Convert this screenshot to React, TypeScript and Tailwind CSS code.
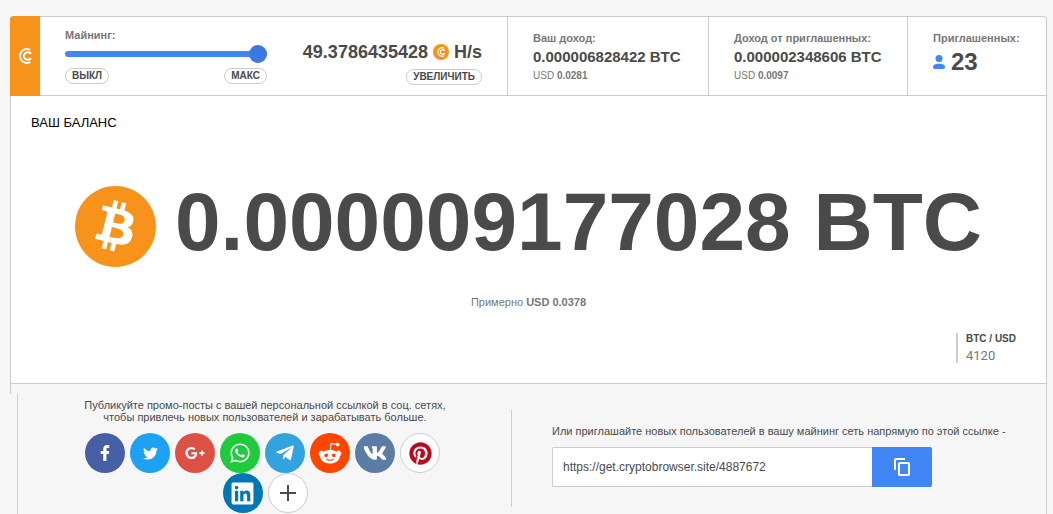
import type { ReactNode } from "react";
import {
  FaFacebookF,
  FaGooglePlusG,
  FaLinkedin,
  FaPinterest,
  FaTelegramPlane,
  FaTwitter,
  FaVk,
  FaWhatsapp,
} from "react-icons/fa";
import { SiBitcoin } from "react-icons/si";

function CryptoMark({ className }: { className: string }) {
  return (
    <svg viewBox="0 0 16 16" className={className} fill="none" stroke="currentColor" strokeLinecap="round">
      <path d="M12.6 1.7A6.9 6.9 0 1 0 12.6 14.3" strokeWidth="1.9" />
      <path d="M13.6 5.2A4.2 3.6 0 1 0 13.6 10.8" strokeWidth="1.9" />
    </svg>
  );
}

function RedditMark() {
  return (
    <svg viewBox="0 0 24 24" className="size-6" fill="currentColor">
      <path
        fillRule="evenodd"
        d="M12 9c2.6 0 4.9.6 6.6 1.7a2.7 2.7 0 1 1 3.300 4.200C21.900 19.200 17.500 22.500 12 22.500S2.100 19.200 2.100 14.900A2.700 2.700 0 1 1 5.400 10.700C7.100 9.600 9.400 9 12 9ZM8.200 12.400a1.900 1.900 0 1 0 0 3.800a1.900 1.900 0 0 0 0-3.800ZM15.800 12.400a1.900 1.900 0 1 0 0 3.800a1.900 1.900 0 0 0 0-3.800ZM7.800 18.100C10 20.600 14 20.600 16.200 18.100L15.500 17.500C13.500 19.300 10.500 19.300 8.500 17.500Z"
      />
      <path d="M12.300 9.500L13 2.500L18.500 3.400" fill="none" stroke="currentColor" strokeWidth="1.100" />
      <circle cx="19.600" cy="3.500" r="1.900" />
    </svg>
  );
}

function PillButton({ children }: { children: ReactNode }) {
  return (
    <button
      type="button"
      className="h-4 rounded-full border border-[#ccc] bg-white px-[6px] text-[10px] leading-[14px] font-bold text-[#4a4a4a]"
    >
      {children}
    </button>
  );
}

function Income({ label, value, usd }: { label: string; value: string; usd: string }) {
  return (
    <section className="border-l border-[#ccc] pt-[14px] pl-[25px] whitespace-nowrap">
      <h2 className="text-[11px] leading-4 font-bold text-[#777]">{label}</h2>
      <p className="text-[15px] leading-[22px] font-bold text-[#4a4a4a]">{value}</p>
      <p className="text-[10px] leading-4 text-[#777]">
        USD <b>{usd}</b>
      </p>
    </section>
  );
}

const networks = [
  { name: "Facebook", style: "bg-[#4760a5] text-white", icon: <FaFacebookF size={16} /> },
  { name: "Twitter", style: "bg-[#1da1f2] text-white", icon: <FaTwitter size={15} /> },
  { name: "Google+", style: "bg-[#dd5044] text-white", icon: <FaGooglePlusG size={20} /> },
  { name: "WhatsApp", style: "bg-[#1fcb3c] text-white", icon: <FaWhatsapp size={22} /> },
  { name: "Telegram", style: "bg-[#33a3df] text-white", icon: <FaTelegramPlane size={20} /> },
  { name: "Reddit", style: "bg-[#ff4500] text-white", icon: <RedditMark /> },
  { name: "VK", style: "bg-[#5a7ca5] text-white", icon: <FaVk size={24} /> },
  { name: "Pinterest", style: "border border-[#ccc] bg-white text-[#bd081c]", icon: <FaPinterest size={23} /> },
  { name: "LinkedIn", style: "bg-[#0077b5] text-white", icon: <FaLinkedin size={25} /> },
];

export default function App() {
  return (
    <main className="flex min-h-screen flex-col bg-[#f6f6f6] pt-4 pr-[6px] pl-[10px] font-['Liberation_Sans',Arial,sans-serif] text-[#4a4a4a]">
      <div className="flex flex-1 flex-col rounded-t border-t border-r border-[#ccc]">
        <div className="rounded-t border-l border-[#ccc] bg-white">
          <header className="-mt-px -ml-px grid grid-cols-[30px_467fr_201fr_199fr_139fr]">
            <div className="flex items-center justify-center rounded-tl bg-[#f7931a] text-white">
              <CryptoMark className="size-4" />
            </div>
            <section className="flex h-20 justify-between border-b border-[#ccc] px-[25px]">
              <div className="flex w-[202px] flex-col pt-[11px]">
                <label htmlFor="mining" className="text-[11px] leading-4 font-bold text-[#777]">
                  Майнинг:
                </label>
                <input
                  id="mining"
                  type="range"
                  defaultValue={100}
                  className="my-[2px] h-[18px] w-full appearance-none bg-transparent [&::-webkit-slider-runnable-track]:h-[6px] [&::-webkit-slider-runnable-track]:rounded-full [&::-webkit-slider-runnable-track]:bg-[#4285f4] [&::-webkit-slider-thumb]:-mt-[6px] [&::-webkit-slider-thumb]:size-[18px] [&::-webkit-slider-thumb]:appearance-none [&::-webkit-slider-thumb]:rounded-full [&::-webkit-slider-thumb]:bg-[#3b78e0]"
                />
                <div className="mt-[3px] flex justify-between">
                  <PillButton>ВЫКЛ</PillButton>
                  <PillButton>МАКС</PillButton>
                </div>
              </div>
              <div className="flex flex-col items-end pt-6">
                <p className="flex items-center gap-[5px] text-[18px] leading-6 font-bold whitespace-nowrap">
                  49.3786435428
                  <span className="flex size-4 items-center justify-center rounded-full bg-[#f7931a] text-white">
                    <CryptoMark className="size-[10px]" />
                  </span>
                  <span>H/s</span>
                </p>
                <div className="mt-[5px] flex">
                  <PillButton>УВЕЛИЧИТЬ</PillButton>
                </div>
              </div>
            </section>
            <div className="grid border-b border-[#ccc]">
              <Income label="Ваш доход:" value="0.000006828422 BTC" usd="0.0281" />
            </div>
            <div className="grid border-b border-[#ccc]">
              <Income label="Доход от приглашенных:" value="0.000002348606 BTC" usd="0.0097" />
            </div>
            <section className="border-b border-l border-[#ccc] pt-[14px] pl-[25px] whitespace-nowrap">
              <h2 className="text-[11px] leading-4 font-bold text-[#777]">Приглашенных:</h2>
              <p className="flex items-center gap-[6px] text-[24px] leading-8 font-bold">
                <svg viewBox="0 0 12 14" className="h-[14px] w-3" fill="#4285f4">
                  <circle cx="6" cy="3.6" r="3.5" />
                  <path d="M0 12.2C0 9.6 2.4 8.7 6 8.7s6 .9 6 3.5c0 1.1-.7 1.7-1.8 1.7H1.8C.7 13.9 0 13.3 0 12.2Z" />
                </svg>
                23
              </p>
            </section>
          </header>

          <section className="border-b border-[#ccc] pt-[19px] pb-5">
            <h1 className="pl-5 text-[13px] leading-4 text-black">ВАШ БАЛАНС</h1>
            <div className="mt-[47px] flex items-start justify-center gap-[19px]">
              <SiBitcoin className="mt-2 size-[81px] shrink-0 text-[#f7931a]" />
              <p className="h-24 text-[82px] leading-[88px] font-bold whitespace-nowrap">0.000009177028 BTC</p>
            </div>
            <p className="mt-5 text-center text-[11px] leading-4 text-[#777]">
              Примерно <b>USD 0.0378</b>
            </p>
            <div className="mt-[23px] mr-[30px] flex justify-end">
              <dl className="h-[30px] border-l-2 border-[#ccc] pl-2">
                <dt className="text-[10px] leading-3 font-bold">BTC / USD</dt>
                <dd className="mt-[3px] font-[Roboto,sans-serif] text-[13px] leading-4 text-[#777]">4120</dd>
              </dl>
            </div>
          </section>
        </div>

        <div className="h-[10px] border-l border-[#ccc]" />
        <div className="ml-[7px] grid flex-1 grid-cols-[494fr_534fr] border-l border-[#ccc]">
          <section className="relative flex flex-col items-center pt-[5px] after:absolute after:top-4 after:right-0 after:bottom-[7px] after:w-px after:bg-[#ccc]">
            <p className="text-center text-[11px] leading-3">
              Публикуйте промо-посты с вашей персональной ссылкой в соц. сетях,
              <br />
              чтобы привлечь новых пользователей и зарабатывать больше.
            </p>
            <div className="mt-[10px] flex max-w-[380px] flex-wrap justify-center">
              {networks.map((network) => (
                <a
                  key={network.name}
                  href="#"
                  aria-label={network.name}
                  className={`mr-[5px] flex size-10 items-center justify-center rounded-full ${network.style}`}
                >
                  {network.icon}
                </a>
              ))}
              <button
                type="button"
                aria-label="Ещё"
                className="flex size-10 items-center justify-center rounded-full border border-[#ccc] bg-white"
              >
                <svg viewBox="0 0 16 16" className="size-4" stroke="#4a4a4a" strokeWidth="2">
                  <path d="M8 0V16M0 8H16" />
                </svg>
              </button>
            </div>
          </section>
          <section className="pt-[29px] pl-10">
            <label htmlFor="invite" className="block text-[11px] leading-4 whitespace-nowrap">
              Или приглашайте новых пользователей в вашу майнинг сеть напрямую по этой ссылке -
            </label>
            <div className="mt-2 flex h-10 w-[380px] max-w-full">
              <input
                id="invite"
                type="text"
                readOnly
                value="https://get.cryptobrowser.site/4887672"
                className="min-w-0 flex-1 rounded-l-xs border border-r-0 border-[#ccc] bg-white px-[10px] text-[12px] outline-none"
              />
              <button
                type="button"
                aria-label="Копировать"
                className="flex w-[60px] items-center justify-center rounded-r-xs bg-[#4285f4] text-white"
              >
                <svg viewBox="0 0 16 18" className="h-[18px] w-4" fill="none" stroke="currentColor" strokeWidth="2">
                  <path d="M1 12V2.200Q1 1 2.200 1H11" />
                  <rect x="5" y="5" width="10" height="12" rx="1" />
                </svg>
              </button>
            </div>
          </section>
        </div>
      </div>
    </main>
  );
}
